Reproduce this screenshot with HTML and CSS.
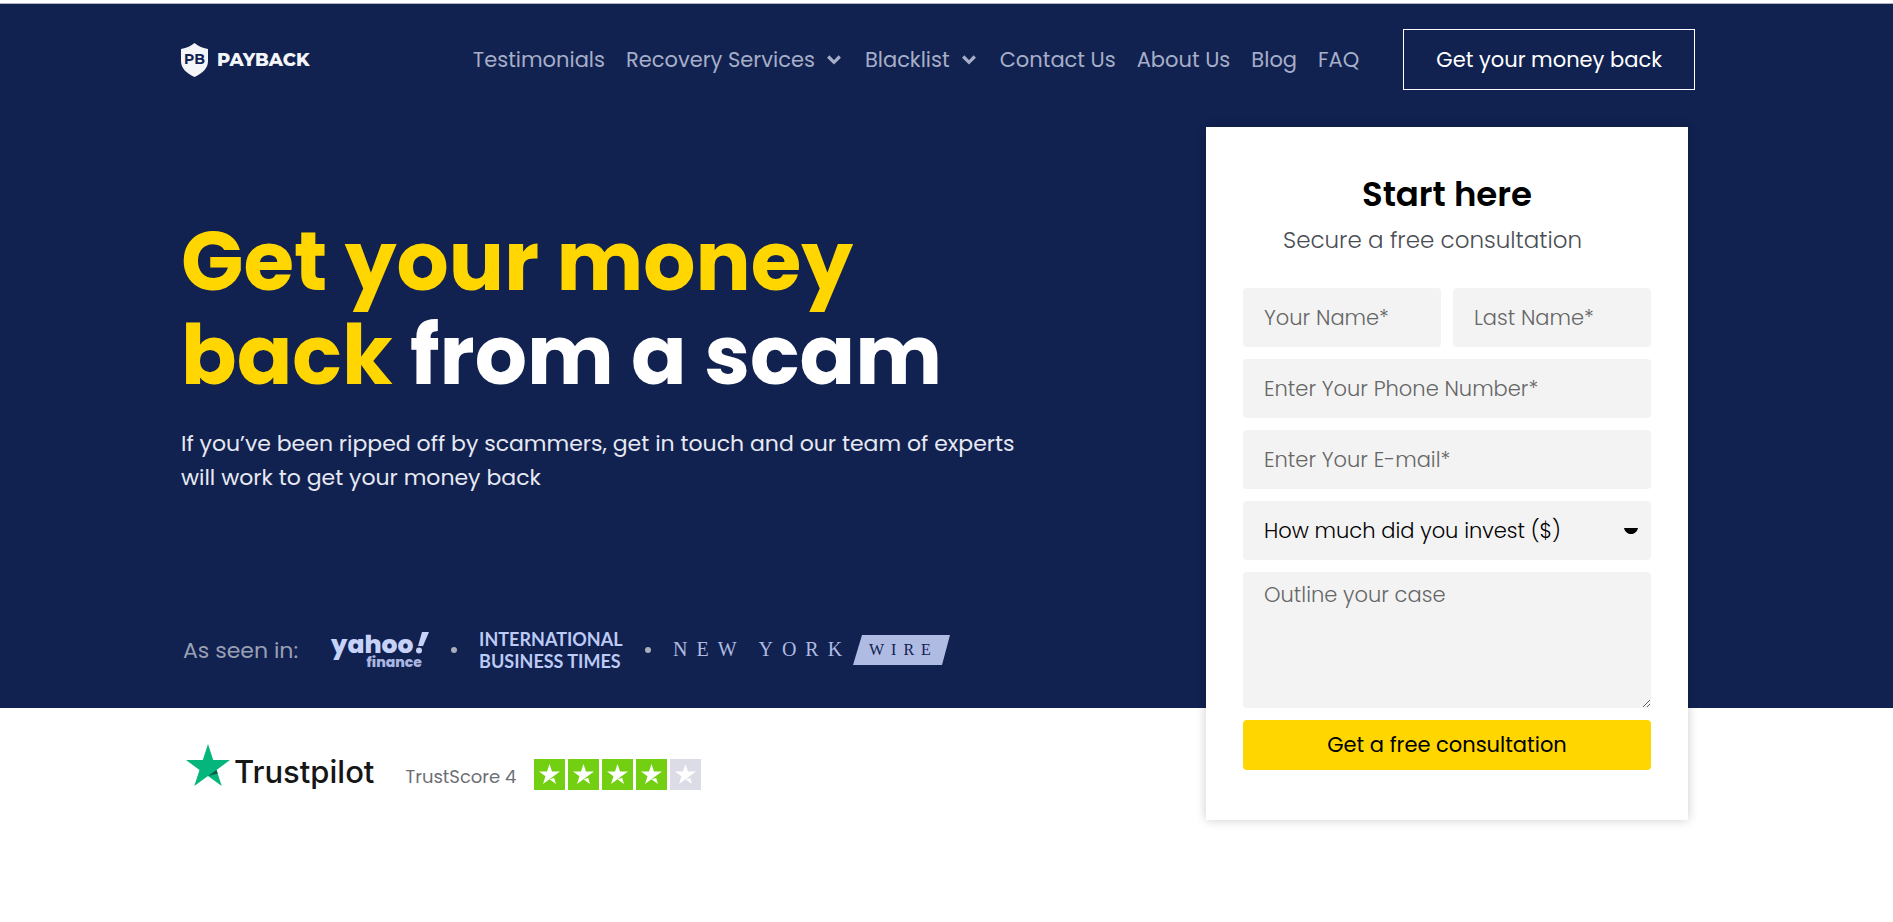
FILE: index.html
```html
<!DOCTYPE html>
<html lang="en">
<head>
<meta charset="utf-8">
<meta name="viewport" content="width=device-width, initial-scale=1">
<title>Payback</title>
<link rel="stylesheet" href="styles.css">
</head>
<body>
<svg class="defs" aria-hidden="true">
  <symbol id="chevron" viewBox="0 0 14 10"><path d="M1.200 1.500 7 7.300 12.800 1.500" fill="none" stroke="currentColor" stroke-width="3.200"/></symbol>
  <symbol id="rating" viewBox="0 0 31 31"><rect width="31" height="31" fill="currentColor"/><path d="M15.500 5 18 12.500H26L19.500 17.300 15.500 20.200 9 25 11.500 17.300 5 12.500H13Z" fill="#fff"/><path d="M15.500 20.200 20.200 19 22 25Z" fill="#fff"/></symbol>
</svg>
<header class="header">
  <div class="container header-row">
    <a class="brand" href="#">
      <svg class="shield" viewBox="0 0 27 34" aria-hidden="true">
        <path d="M13.500 0C17 3 21 5 27 6V18C27 25 22 30 13.500 34 5 30 0 25 0 18V6C6 5 10 3 13.500 0Z" fill="#f4f5f8"/>
        <text class="shield-text" x="13.500" y="21" text-anchor="middle">PB</text>
      </svg>
      <span>PAYBACK</span>
    </a>
    <nav class="nav">
      <a href="#">Testimonials</a>
      <a class="has-menu" href="#">Recovery Services <svg class="chevron" aria-hidden="true"><use href="#chevron"/></svg></a>
      <a class="has-menu" href="#">Blacklist <svg class="chevron" aria-hidden="true"><use href="#chevron"/></svg></a>
      <a href="#">Contact Us</a>
      <a href="#">About Us</a>
      <a href="#">Blog</a>
      <a href="#">FAQ</a>
    </nav>
    <a class="cta" href="#case-form">Get your money back</a>
  </div>
</header>
<main>
  <section class="hero">
    <div class="container hero-grid">
      <div class="pitch">
        <h1><mark>Get your money<br>back</mark> from a scam</h1>
        <p class="lead">If you’ve been ripped off by scammers, get in touch and our team of experts will work to get your money back</p>
        <div class="press">
          <span class="press-label">As seen in:</span>
          <svg class="yahoo" viewBox="0 0 98 38" role="img" aria-label="Yahoo Finance">
            <text class="yahoo-name" x="0" y="22">yahoo</text>
            <path d="M91 1h7l-6 14h-5Z"/><circle cx="88" cy="19.500" r="3"/>
            <text class="yahoo-sub" x="91" y="36" text-anchor="end">finance</text>
          </svg>
          <span class="dot"></span>
          <span class="ibt">INTERNATIONAL<br>BUSINESS TIMES</span>
          <span class="dot"></span>
          <svg class="wire" viewBox="0 0 278 30" role="img" aria-label="New York Wire">
            <text class="wire-name" x="0" y="21">NEW YORK</text>
            <path d="M189 0H277L269 30H180Z"/>
            <text class="wire-badge" x="196" y="20">WIRE</text>
          </svg>
        </div>
      </div>
      <form class="card" id="case-form">
        <h2>Start here</h2>
        <p class="card-sub">Secure a free consultation</p>
        <div class="fields">
          <input class="field half" type="text" placeholder="Your Name*" aria-label="Your Name">
          <input class="field half" type="text" placeholder="Last Name*" aria-label="Last Name">
          <input class="field" type="tel" placeholder="Enter Your Phone Number*" aria-label="Phone Number">
          <input class="field" type="email" placeholder="Enter Your E-mail*" aria-label="E-mail">
          <div class="select-wrap">
            <select class="field" aria-label="Amount invested"><option>How much did you invest ($)</option></select>
            <svg class="caret" viewBox="0 0 14 6" aria-hidden="true"><path d="M0 0H14C13 4 10 6 7 6S1 4 0 0Z"/></svg>
          </div>
          <textarea class="field area" placeholder="Outline your case" aria-label="Outline your case"></textarea>
          <button class="submit" type="submit">Get a free consultation</button>
        </div>
      </form>
    </div>
  </section>
  <section class="trust">
    <div class="container trust-row">
      <a class="trustpilot" href="#">
        <svg class="tp-star" viewBox="0 0 44 42" aria-hidden="true"><path d="M22 0 27.200 16H44L30.500 26 35.700 42 22 32 8.300 42 13.500 26 0 16H16.800Z" fill="#04b67b"/><path d="M22 32 30.500 26 31.800 29.500Z" fill="#105a49"/></svg>
        <span>Trustpilot</span>
      </a>
      <span class="score">TrustScore 4</span>
      <div class="stars" role="img" aria-label="4 out of 5 stars">
        <svg><use href="#rating"/></svg><svg><use href="#rating"/></svg><svg><use href="#rating"/></svg><svg><use href="#rating"/></svg><svg class="off"><use href="#rating"/></svg>
      </div>
    </div>
  </section>
</main>
</body>
</html>
```
FILE: styles.css
```css
* { box-sizing: border-box; }
body {
  min-height: 100vh;
  margin: 0;
  padding-top: 3px;
  background: #fff;
  color: #000;
  font-family: Poppins, Inter, "Liberation Sans", sans-serif;
}
a { color: inherit; text-decoration: none; }
.defs { display: none; }
.container { max-width: 1514px; margin: 0 auto; }
.header, .hero, .trust { padding-right: 17px; }

.header {
  border-top: 1px solid #aeb3c6;
  background: #112150;
}
.header-row { display: flex; align-items: center; height: 111px; }
.brand {
  display: flex;
  align-items: center;
  gap: 9px;
  margin-right: auto;
  color: #f4f5f8;
  font-family: Montserrat, Poppins, sans-serif;
  font-size: 18px;
  font-weight: 800;
}
.shield { width: 27px; height: 34px; }
.shield-text { font-size: 14px; font-weight: 700; fill: #112150; }
.nav { display: flex; gap: 21px; margin-right: 44px; color: #a6aec8; font-size: 21px; }
.nav a { display: flex; align-items: center; white-space: nowrap; }
.nav .has-menu { gap: 12px; margin-right: 3px; }
.chevron { width: 14px; height: 10px; }
.cta {
  padding: 16px 32px;
  border: 1px solid #fff;
  color: #fff;
  font-size: 21px;
  line-height: 27px;
  white-space: nowrap;
}

.hero { background: #112150; }
.hero-grid {
  display: grid;
  grid-template-columns: 1fr 482px;
  align-items: start;
  padding: 12px 7px 0 0;
}
.pitch { padding-top: 88px; }
h1 {
  margin: 0;
  color: #fff;
  font-size: 82px;
  font-weight: 700;
  line-height: 94px;
}
mark { background: none; color: #ffd600; }
.lead { max-width: 860px; margin: 24px 0 0; color: #e6e9f2; font-size: 22px; line-height: 34px; }
.press {
  display: flex;
  align-items: center;
  margin-top: 133px;
  padding-left: 2px;
  color: #9aa0b3;
  font-size: 22px;
}
.press-label { margin-right: 33px; }
.yahoo { width: 98px; height: 38px; overflow: visible; fill: #c6d2f7; font-family: Poppins, sans-serif; font-weight: 800; }
.yahoo-name { font-size: 25px; }
.yahoo-sub { font-size: 14px; fill: #a9b6e0; }
.dot { width: 6px; height: 6px; margin: 0 22px; border-radius: 50%; background: #a9aebd; }
.ibt { color: #bccbf5; font: 700 18px/22px Lato, sans-serif; white-space: nowrap; }
.wire { width: 278px; height: 30px; fill: #afbbe2; font-family: "Liberation Serif", serif; }
.wire-name { font-size: 20px; letter-spacing: 9px; }
.wire-badge { fill: #112150; font-size: 16px; letter-spacing: 7px; }

.card {
  position: relative;
  margin-bottom: -112px;
  padding: 47px 37px 50px;
  background: #fff;
  box-shadow: 0 0 10px rgba(0, 0, 0, 0.2);
}
.card h2 { margin: 0; font-size: 34px; font-weight: 600; line-height: 40px; text-align: center; }
.card-sub { margin: 10px 40px 32px; color: #4a4e54; font-size: 23px; font-weight: 300; line-height: 32px; white-space: nowrap; }
.fields { display: grid; grid-template-columns: 1fr 1fr; gap: 12px; }
.field {
  grid-column: 1 / -1;
  width: 100%;
  height: 59px;
  margin: 0;
  padding: 0 21px;
  border: 0;
  border-radius: 4px;
  background: #f3f3f3;
  color: #000;
  font: 300 21px/28px Poppins, Inter, "Liberation Sans", sans-serif;
}
.field::placeholder { color: #666; opacity: 1; }
.half { grid-column: auto; }
.select-wrap { position: relative; grid-column: 1 / -1; height: 59px; }
select.field { appearance: none; }
.caret { position: absolute; top: 27px; right: 13px; width: 14px; height: 6px; pointer-events: none; }
.area { display: block; height: 136px; padding: 9px 21px; resize: vertical; }
.submit {
  grid-column: 1 / -1;
  height: 50px;
  border: 0;
  border-radius: 4px;
  background: #ffd600;
  color: #000;
  font: 400 21px/28px Poppins, Inter, "Liberation Sans", sans-serif;
}

.trust-row { display: flex; align-items: flex-start; padding: 36px 0 136px 5px; }
.trustpilot { display: flex; align-items: flex-start; gap: 4px; }
.tp-star { width: 44px; height: 42px; }
.trustpilot span { margin-top: 10px; color: #161616; font: 500 31px/36px Inter, sans-serif; }
.score { margin: 21px 18px 0 31px; color: #6d6f75; font-size: 18px; line-height: 24px; }
.stars { display: flex; gap: 3px; margin-top: 15px; color: #73cf11; }
.stars svg { width: 31px; height: 31px; }
.stars .off { color: #dcdce6; }
```
